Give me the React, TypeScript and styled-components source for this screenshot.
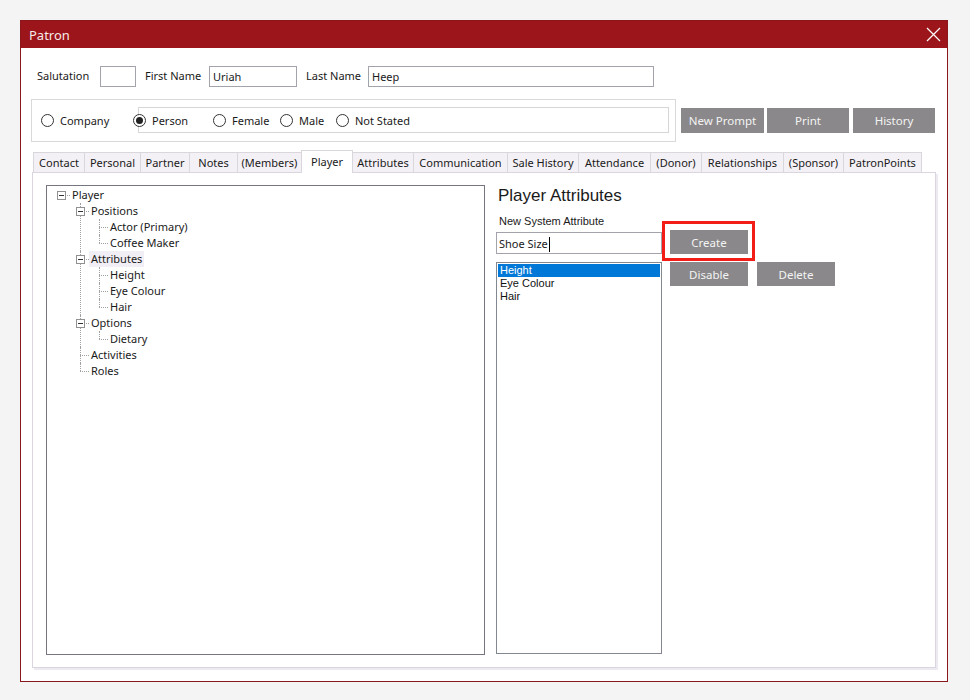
import styled, { createGlobalStyle } from 'styled-components';

const UI = `"Segoe UI", "Noto Sans", "Open Sans", sans-serif`;
const CLASSIC = `"Liberation Sans", Arial, sans-serif`;

const GlobalStyle = createGlobalStyle`
  html, body {
    margin: 0;
    padding: 0;
    background: #f4f4f4;
  }
  body {
    padding: 20px;
    font-family: ${UI};
    font-size: 11px;
    color: #1a1a1a;
  }
  * {
    box-sizing: border-box;
  }
`;

type TreeNode = { label: string; open?: boolean; hot?: boolean; children?: TreeNode[] };

const tree: TreeNode = {
  label: 'Player',
  open: true,
  children: [
    { label: 'Positions', open: true, children: [{ label: 'Actor (Primary)' }, { label: 'Coffee Maker' }] },
    {
      label: 'Attributes',
      open: true,
      hot: true,
      children: [{ label: 'Height' }, { label: 'Eye Colour' }, { label: 'Hair' }],
    },
    { label: 'Options', open: true, children: [{ label: 'Dietary' }] },
    { label: 'Activities' },
    { label: 'Roles' },
  ],
};

const tabs = [
  { label: 'Contact', w: 51 },
  { label: 'Personal', w: 56 },
  { label: 'Partner', w: 49 },
  { label: 'Notes', w: 48 },
  { label: '(Members)', w: 64 },
  { label: 'Player', w: 51, active: true },
  { label: 'Attributes', w: 61 },
  { label: 'Communication', w: 94 },
  { label: 'Sale History', w: 71 },
  { label: 'Attendance', w: 72 },
  { label: '(Donor)', w: 51 },
  { label: 'Relationships', w: 82 },
  { label: '(Sponsor)', w: 60 },
  { label: 'PatronPoints', w: 78 },
];

function TreeBranch({ node, level, last }: { node: TreeNode; level: number; last: boolean }) {
  return (
    <TreeItem $level={level} $last={last}>
      <TreeRow $level={level}>
        <Gutter>
          {node.children && (
            <Expander>
              <Dash />
            </Expander>
          )}
        </Gutter>
        <NodeLabel $hot={node.hot}>{node.label}</NodeLabel>
      </TreeRow>
      {node.children && node.open && (
        <TreeList>
          {node.children.map((c, i) => (
            <TreeBranch key={c.label} node={c} level={level + 1} last={i === node.children!.length - 1} />
          ))}
        </TreeList>
      )}
    </TreeItem>
  );
}

function Radio({ label, on, w, pull }: { label: string; on?: boolean; w?: number; pull?: boolean }) {
  return (
    <RadioItem $w={w} $pull={pull}>
      <Circle>{on && <Dot />}</Circle>
      <span>{label}</span>
    </RadioItem>
  );
}

export default function App() {
  return (
    <>
      <GlobalStyle />
      <Window>
        <TitleBar>
          <Title>Patron</Title>
          <svg width="15" height="15" viewBox="0 0 15 15">
            <path d="M1 1 L14 14 M14 1 L1 14" stroke="#ffffff" strokeWidth="1.2" fill="none" />
          </svg>
        </TitleBar>
        <Body>
          <NameRow>
            <FieldLabel $w={63}>Salutation</FieldLabel>
            <TextBox $w={36} />
            <FieldLabel $w={64} $gap={9}>First Name</FieldLabel>
            <TextBox $w={88}>Uriah</TextBox>
            <FieldLabel $w={62} $gap={9}>Last Name</FieldLabel>
            <TextBox $w={286}>Heep</TextBox>
          </NameRow>

          <TypeRow>
            <GroupBox>
              <Radio label="Company" w={97} />
              <InnerBox>
                <Radio label="Person" on w={80} pull />
                <Radio label="Female" w={67} />
                <Radio label="Male" w={56} />
                <Radio label="Not Stated" />
              </InnerBox>
            </GroupBox>
            <FlatButton $w={83} $gap={5}>New Prompt</FlatButton>
            <FlatButton $w={82} $gap={3}>Print</FlatButton>
            <FlatButton $w={82} $gap={4}>History</FlatButton>
          </TypeRow>

          <TabStrip>
            {tabs.map((t) => (
              <Tab key={t.label} $w={t.w} $active={t.active}>
                {t.label}
              </Tab>
            ))}
          </TabStrip>

          <TabPanel>
            <TreeBox>
              <TreeList>
                <TreeBranch node={tree} level={0} last />
              </TreeList>
            </TreeBox>

            <AttrColumn>
              <Heading>Player Attributes</Heading>
              <SmallLabel>New System Attribute</SmallLabel>
              <InputRow>
                <AttrInput>
                  Shoe Size<Caret />
                </AttrInput>
                <Highlight>
                  <FlatButton $w={78} $h={24} $gap={0}>Create</FlatButton>
                </Highlight>
              </InputRow>
              <ListRow>
                <ListBox>
                  <ListItem $selected>Height</ListItem>
                  <ListItem>Eye Colour</ListItem>
                  <ListItem>Hair</ListItem>
                </ListBox>
                <FlatButton $w={78} $h={24} $gap={8}>Disable</FlatButton>
                <FlatButton $w={78} $h={24} $gap={9}>Delete</FlatButton>
              </ListRow>
            </AttrColumn>
          </TabPanel>
        </Body>
      </Window>
    </>
  );
}

const Window = styled.div`
  width: 928px;
  height: 662px;
  background: #ffffff;
  border: 1px solid #8a171b;
  display: flex;
  flex-direction: column;
`;

const TitleBar = styled.div`
  height: 27px;
  background: #9b151a;
  display: flex;
  align-items: center;
  justify-content: space-between;
  padding: 0 6px 0 8px;
  flex-shrink: 0;
`;

const Title = styled.span`
  color: #f6eaea;
  font-size: 13px;
  font-weight: 400;
`;

const Body = styled.div`
  flex: 1;
  padding: 0 10px;
  display: flex;
  flex-direction: column;
`;

const NameRow = styled.div`
  display: flex;
  align-items: center;
  margin-top: 18px;
  padding-left: 6px;
  height: 21px;
`;

const FieldLabel = styled.span<{ $w: number; $gap?: number }>`
  width: ${(p) => p.$w}px;
  margin-left: ${(p) => p.$gap || 0}px;
  margin-top: -3px;
`;

const TextBox = styled.div<{ $w: number }>`
  width: ${(p) => p.$w}px;
  height: 21px;
  border: 1px solid #a3a3ab;
  padding: 2px 3px 0;
  line-height: 16px;
`;

const TypeRow = styled.div`
  display: flex;
  align-items: center;
  margin-top: 12px;
`;

const GroupBox = styled.div`
  width: 645px;
  height: 43px;
  border: 1px solid #d9d9d9;
  display: flex;
  align-items: center;
  padding-left: 9px;
`;

const InnerBox = styled.div`
  flex: 0 0 531px;
  height: 26px;
  border: 1px solid #d6d6d6;
  display: flex;
  align-items: center;
  margin-top: -1px;
`;

const RadioItem = styled.div<{ $w?: number; $pull?: boolean }>`
  display: flex;
  align-items: center;
  gap: 6px;
  width: ${(p) => (p.$w ? `${p.$w}px` : 'auto')};
  margin-left: ${(p) => (p.$pull ? '-6px' : '0')};
  flex-shrink: 0;
`;

const Circle = styled.span`
  width: 13px;
  height: 13px;
  border: 1px solid #333333;
  border-radius: 50%;
  background: #ffffff;
  display: inline-flex;
  align-items: center;
  justify-content: center;
  flex-shrink: 0;
`;

const Dot = styled.span`
  width: 7px;
  height: 7px;
  border-radius: 50%;
  background: #222222;
`;

const FlatButton = styled.div<{ $w: number; $h?: number; $gap?: number }>`
  width: ${(p) => p.$w}px;
  height: ${(p) => p.$h || 25}px;
  margin-left: ${(p) => p.$gap ?? 6}px;
  background: #8a888a;
  color: #f4f4f4;
  font-size: 11.5px;
  display: flex;
  align-items: center;
  justify-content: center;
  flex-shrink: 0;
`;

const TabStrip = styled.div`
  display: flex;
  align-items: flex-end;
  margin-top: 7px;
  padding-left: 2px;
  height: 23px;
  position: relative;
  z-index: 1;
`;

const Tab = styled.div<{ $w: number; $active?: boolean }>`
  width: ${(p) => p.$w + 1}px;
  height: ${(p) => (p.$active ? 23 : 20)}px;
  margin-bottom: ${(p) => (p.$active ? -1 : 0)}px;
  margin-right: -1px;
  background: ${(p) => (p.$active ? '#ffffff' : '#f4f1f6')};
  border: 1px solid #d9d6dc;
  border-bottom: none;
  display: flex;
  align-items: ${(p) => (p.$active ? 'flex-start' : 'center')};
  padding-top: ${(p) => (p.$active ? 3 : 0)}px;
  justify-content: center;
  white-space: nowrap;
  flex-shrink: 0;
  position: relative;
  z-index: ${(p) => (p.$active ? 2 : 1)};
`;

const TabPanel = styled.div`
  width: 904px;
  height: 496px;
  margin-left: 1px;
  border: 1px solid #dbd5df;
  box-shadow: 2px 2px 0 #eeeaf2;
  display: flex;
  align-items: flex-start;
  padding: 12px 0 0 13px;
`;

const TreeBox = styled.div`
  width: 439px;
  height: 470px;
  border: 1px solid #767680;
  padding-top: 1px;
`;

const TreeList = styled.ul`
  list-style: none;
  margin: 0;
  padding: 0;
`;

const TreeItem = styled.li<{ $level: number; $last: boolean }>`
  position: relative;
  &::before {
    content: ${(p) => (p.$level > 0 ? "''" : 'none')};
    position: absolute;
    left: ${(p) => 10 + p.$level * 19 + 4}px;
    top: 0;
    height: ${(p) => (p.$last ? '8px' : '100%')};
    border-left: 1px dotted #a0a0a0;
  }
`;

const TreeRow = styled.div<{ $level: number }>`
  height: 16px;
  display: flex;
  align-items: center;
  padding-left: ${(p) => 10 + p.$level * 19}px;
  position: relative;
`;

const Gutter = styled.span`
  width: 13px;
  height: 16px;
  position: relative;
  display: flex;
  align-items: center;
  flex-shrink: 0;
  &::after {
    content: '';
    position: absolute;
    left: 4px;
    width: 9px;
    top: 8px;
    border-top: 1px dotted #a0a0a0;
  }
`;

const Expander = styled.span`
  width: 9px;
  height: 9px;
  border: 1px solid #919191;
  background: #ffffff;
  position: relative;
  z-index: 1;
  display: flex;
  align-items: center;
  justify-content: center;
`;

const Dash = styled.span`
  width: 5px;
  height: 1px;
  background: #333333;
`;

const NodeLabel = styled.span<{ $hot?: boolean }>`
  padding: 0 2px;
  height: 16px;
  line-height: 16px;
  white-space: nowrap;
  background: ${(p) => (p.$hot ? '#f2eef5' : 'transparent')};
`;

const AttrColumn = styled.div`
  margin-left: 11px;
  display: flex;
  flex-direction: column;
`;

const Heading = styled.div`
  font-family: ${CLASSIC};
  font-size: 17px;
  line-height: 20px;
  margin: 1px 0 0 2px;
`;

const SmallLabel = styled.div`
  font-family: ${CLASSIC};
  font-size: 11px;
  line-height: 14px;
  margin: 8px 0 0 3px;
`;

const InputRow = styled.div`
  display: flex;
  align-items: flex-end;
  margin-top: 2px;
`;

const AttrInput = styled.div`
  width: 166px;
  height: 22px;
  border: 1px solid #a3a3ab;
  padding: 2px 2px 0;
  line-height: 16px;
  display: flex;
  align-items: center;
`;

const Caret = styled.span`
  width: 1px;
  height: 15px;
  background: #000000;
  margin-left: 1px;
`;

const Highlight = styled.div`
  position: relative;
  margin-left: 8px;
  &::after {
    content: '';
    position: absolute;
    left: -8px;
    top: -9px;
    right: -7px;
    bottom: -7px;
    border: 3px solid #f21d17;
  }
`;

const ListRow = styled.div`
  display: flex;
  align-items: flex-start;
  margin-top: 8px;
`;

const ListBox = styled.div`
  width: 166px;
  height: 392px;
  border: 1px solid #828790;
  padding: 1px;
`;

const ListItem = styled.div<{ $selected?: boolean }>`
  height: 13px;
  line-height: 13px;
  padding-left: 2px;
  font-family: ${CLASSIC};
  font-size: 11px;
  background: ${(p) => (p.$selected ? '#0078d7' : 'transparent')};
  color: ${(p) => (p.$selected ? '#ffffff' : '#111111')};
`;
